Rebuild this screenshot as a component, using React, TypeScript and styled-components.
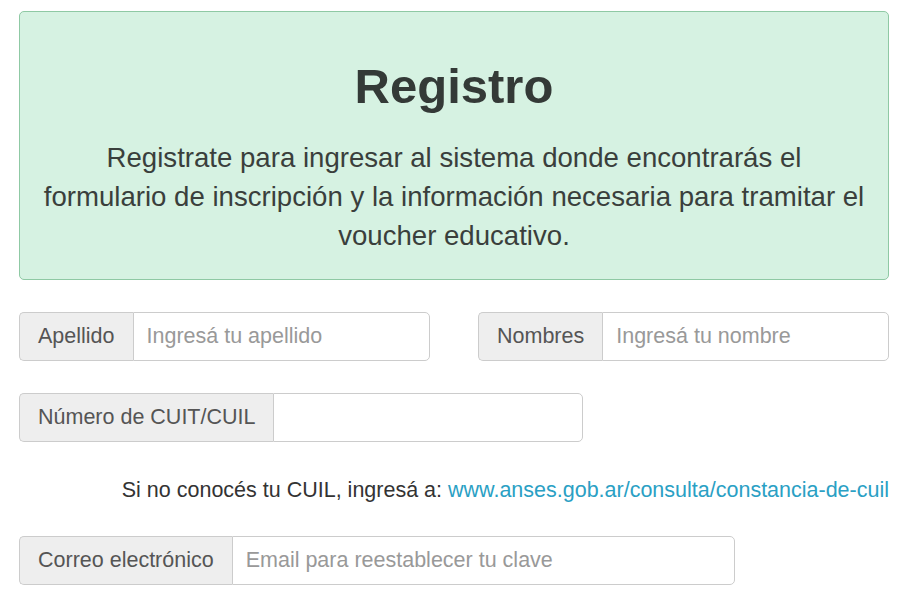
import styled, { createGlobalStyle } from "styled-components";

const GlobalStyle = createGlobalStyle`
  * {
    box-sizing: border-box;
  }
  body {
    margin: 0;
    background: #fff;
    font-family: "Liberation Sans", Arial, sans-serif;
    color: #333;
  }
`;

const Page = styled.div`
  padding: 11px 11px 0 19px;
`;

const Alert = styled.div`
  background: #d6f2e2;
  border: 1px solid #8fc9a4;
  border-radius: 5px;
  padding: 48px 20px 24px;
  text-align: center;
`;

const Title = styled.h1`
  margin: 0 0 24px;
  font-size: 49px;
  line-height: 1.1;
  font-weight: 700;
  color: #343a37;
`;

const Lead = styled.p`
  margin: 0 auto;
  font-size: 27.6px;
  line-height: 39px;
  color: #3a3f3c;
`;

const Form = styled.form`
  display: flex;
  flex-direction: column;
  margin-top: 32px;
`;

const TwoCols = styled.div`
  display: grid;
  grid-template-columns: minmax(0, 1fr) minmax(0, 1fr);
  gap: 48px;
  margin-bottom: 32px;
`;

const Group = styled.div<{ $width?: number }>`
  display: flex;
  height: 49px;
  min-width: 0;
  width: ${(p) => (p.$width ? `${p.$width}px` : "100%")};
`;

const Addon = styled.span`
  display: flex;
  align-items: center;
  padding: 1px 18px 0;
  background: #eee;
  border: 1px solid #ccc;
  border-right: none;
  border-radius: 5px 0 0 5px;
  font-size: 21.5px;
  color: #555;
  white-space: nowrap;
`;

const Input = styled.input`
  flex: 1;
  min-width: 0;
  width: 0;
  height: 100%;
  padding: 1px 13px 0;
  border: 1px solid #ccc;
  border-radius: 0 5px 5px 0;
  font-family: "Liberation Sans", Arial, sans-serif;
  font-size: 21.5px;
  color: #555;
  background: #fff;
  outline: none;

  &::placeholder {
    color: #999;
  }
`;

const Help = styled.p`
  margin: 33px 0 31px;
  font-size: 21.5px;
  line-height: 30px;
  text-align: right;
  color: #333;

  a {
    color: #2aa0c4;
    text-decoration: none;
  }
`;

export default function App() {
  return (
    <>
      <GlobalStyle />
      <Page>
        <Alert>
          <Title>Registro</Title>
          <Lead>
            Registrate para ingresar al sistema donde encontrarás el
            <br />
            formulario de inscripción y la información necesaria para tramitar
            el voucher educativo.
          </Lead>
        </Alert>
        <Form onSubmit={(e) => e.preventDefault()}>
          <TwoCols>
            <Group>
              <Addon>Apellido</Addon>
              <Input placeholder="Ingresá tu apellido" />
            </Group>
            <Group>
              <Addon>Nombres</Addon>
              <Input placeholder="Ingresá tu nombre" />
            </Group>
          </TwoCols>
          <Group $width={564}>
            <Addon>Número de CUIT/CUIL</Addon>
            <Input />
          </Group>
          <Help>
            Si no conocés tu CUIL, ingresá a:{" "}
            <a href="#">www.anses.gob.ar/consulta/constancia-de-cuil</a>
          </Help>
          <Group $width={716}>
            <Addon>Correo electrónico</Addon>
            <Input placeholder="Email para reestablecer tu clave" />
          </Group>
        </Form>
      </Page>
    </>
  );
}
